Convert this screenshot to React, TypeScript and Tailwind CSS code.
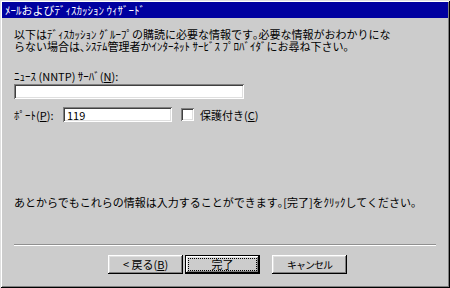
import React from 'react'

const font = { fontFamily: '"Noto Sans CJK JP", "Liberation Sans", sans-serif' }

const sunken =
  'bg-white shadow-[inset_1px_1px_#808080,inset_-1px_-1px_#ffffff,inset_2px_2px_#404040,inset_-2px_-2px_#dfdfdf]'
const raised =
  'bg-[#cccccc] shadow-[inset_-1px_-1px_#000000,inset_1px_1px_#ffffff,inset_-2px_-2px_#808080,inset_2px_2px_#dfdfdf]'

function Btn({ children, primary }: { children: React.ReactNode; primary?: boolean }) {
  if (primary) {
    return (
      <div className="w-[75px] h-[19px] border border-black">
        <div className={`${raised} w-full h-full p-[2px]`}>
          <div className="w-full h-full border border-dotted border-black flex items-center justify-center text-[11px] leading-none text-black">
            {children}
          </div>
        </div>
      </div>
    )
  }
  return (
    <div className={`${raised} w-[75px] h-[19px] flex items-center justify-center text-[11px] leading-none text-black`}>
      {children}
    </div>
  )
}

export default function App() {
  return (
    <div
      className="w-[450px] h-[288px] bg-[#cccccc] flex flex-col shadow-[inset_1px_1px_#dfdfdf,inset_-1px_-1px_#000000,inset_2px_2px_#ffffff,inset_-2px_-2px_#808080] overflow-hidden"
      style={font}
    >
      {/* タイトルバー */}
      <div className="mx-[2px] mt-[2px] h-[16px] bg-[#0000a0] flex items-center pl-[3px] text-white text-[11px] leading-none">
        ﾒｰﾙおよびﾃﾞｨｽｶｯｼｮﾝ ｳｨｻﾞｰﾄﾞ
      </div>

      <div className="flex flex-col pl-[14px] pr-[14px] text-[11px] leading-[12px] text-black">
        <p className="mt-[10px]">
          以下はﾃﾞｨｽｶｯｼｮﾝ ｸﾞﾙｰﾌﾟの購読に必要な情報です｡必要な情報がおわかりにな
          <br />
          らない場合は､ｼｽﾃﾑ管理者かｲﾝﾀｰﾈｯﾄ ｻｰﾋﾞｽ ﾌﾟﾛﾊﾞｲﾀﾞにお尋ね下さい｡
        </p>

        <div className="mt-[18px]">
          ﾆｭｰｽ (NNTP) ｻｰﾊﾞ(<span className="underline">N</span>):
        </div>
        <div className={`${sunken} mt-[2px] w-[230px] h-[15px]`} />

        <div className="mt-[8px] flex items-center h-[15px]">
          <span className="w-[49px]">
            ﾎﾟｰﾄ(<span className="underline">P</span>):
          </span>
          <div className={`${sunken} w-[109px] h-[15px] flex items-center pl-[4px]`}>119</div>
          <div className={`${sunken} ml-[9px] w-[13px] h-[13px]`} />
          <span className="ml-[6px]">
            保護付き(<span className="underline">C</span>)
          </span>
        </div>

        <p className="mt-[74px]">あとからでもこれらの情報は入力することができます｡[完了]をｸﾘｯｸしてください｡</p>

        <div className="mt-[36px] w-[422px] h-[2px] border-t border-[#909090] border-b border-b-white" />

        <div className="mt-[9px] flex pl-[94px]">
          <Btn>&lt; 戻る(<span className="underline">B</span>)</Btn>
          <div className="ml-[2px]">
            <Btn primary>完了</Btn>
          </div>
          <div className="ml-[12px]">
            <Btn>
              <span className="text-[10px] tracking-[-1px]">キャンセル</span>
            </Btn>
          </div>
        </div>
      </div>
    </div>
  )
}
